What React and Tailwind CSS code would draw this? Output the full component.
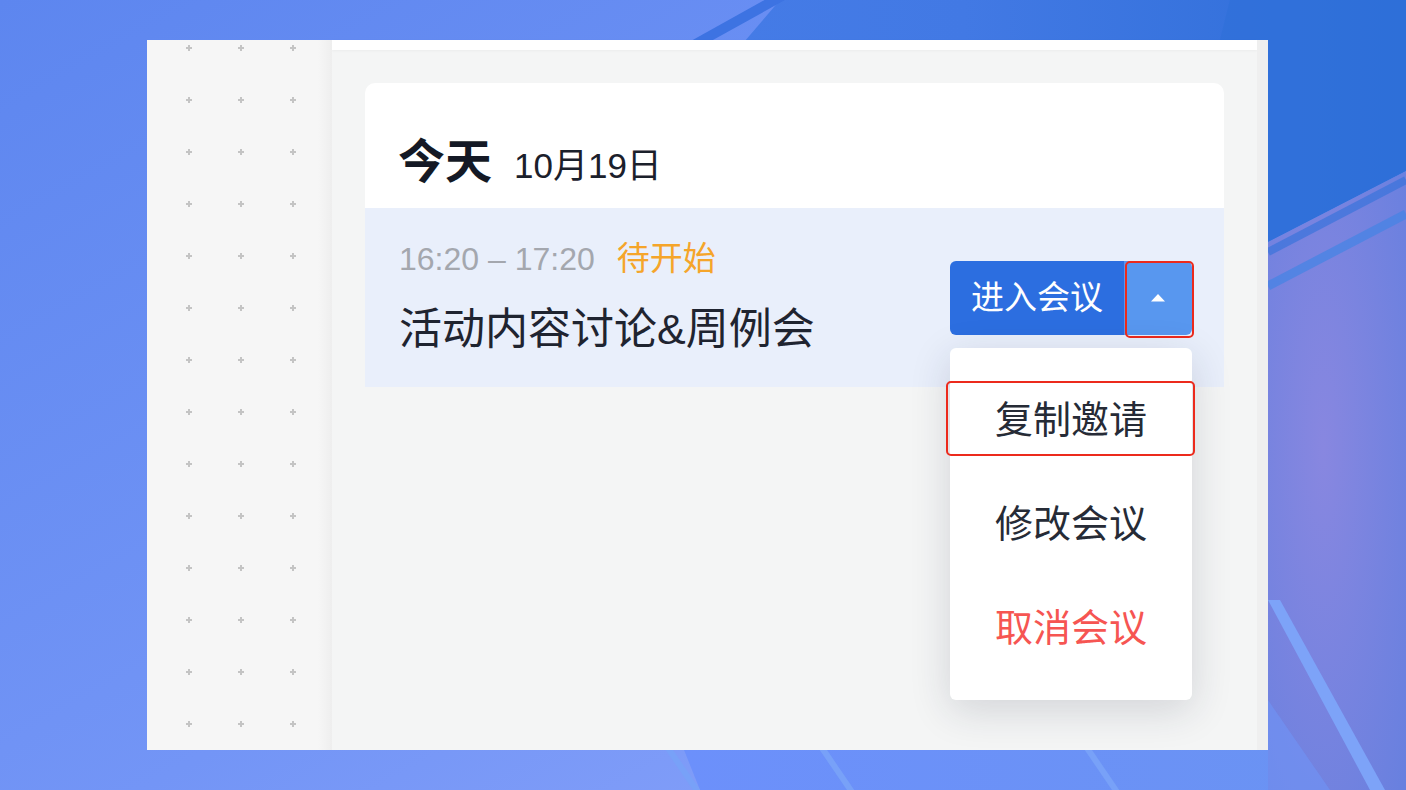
import React from 'react';

const fontStack = "font-['Liberation_Sans','Noto_Sans_CJK_SC',sans-serif]";

const Backdrop = () => (
    <svg className="absolute inset-0" width="1406" height="790" viewBox="0 0 1406 790">
        <defs>
            <linearGradient id="bgBase" x1="0" y1="0" x2="1" y2="1">
                <stop offset="0" stopColor="#5d86ef" />
                <stop offset="0.55" stopColor="#7395f6" />
                <stop offset="1" stopColor="#8ea5fb" />
            </linearGradient>
            <linearGradient id="bgTop" x1="0" y1="0" x2="1" y2="0">
                <stop offset="0" stopColor="#4a7fea" />
                <stop offset="0.6" stopColor="#4279e4" />
                <stop offset="1" stopColor="#2e6ed8" />
            </linearGradient>
            <radialGradient id="bgPurple" cx="0.4" cy="0.45" r="0.8">
                <stop offset="0" stopColor="#8887e0" />
                <stop offset="1" stopColor="#6880df" />
            </radialGradient>
            <linearGradient id="bgBottom" x1="0" y1="0" x2="1" y2="0">
                <stop offset="0" stopColor="#6c90fb" />
                <stop offset="1" stopColor="#6a93f2" />
            </linearGradient>
        </defs>
        <rect width="1406" height="790" fill="url(#bgBase)" />
        <polygon points="680,740 1406,740 1406,790 700,790" fill="url(#bgBottom)" />
        <polygon points="780,0 1406,0 1406,171 1268,242 640,560 300,560" fill="url(#bgTop)" />
        <polygon points="1406,171 1406,790 1268,790 1268,242" fill="url(#bgPurple)" />
        <polygon points="1406,0 1406,171 1268,242 1200,120 1230,0" fill="#2f6fd9" opacity="0.6" />
        <line x1="782" y1="-4" x2="692" y2="46" stroke="#3d73e2" strokeWidth="10" />
        <line x1="1268" y1="286" x2="1406" y2="214" stroke="#4a84e4" strokeWidth="9" opacity="0.8" />
        <line x1="1268" y1="252" x2="1406" y2="180" stroke="#3a74dc" strokeWidth="8" opacity="0.7" />
        <polygon points="1268,600 1280,600 1385,790 1370,790" fill="#7da3f8" />
        <polygon points="1268,700 1268,790 1330,790" fill="#6f95f6" opacity="0.6" />
        <line x1="668" y1="748" x2="698" y2="792" stroke="#78a1f8" strokeWidth="6" />
        <line x1="822" y1="748" x2="852" y2="792" stroke="#78a1f8" strokeWidth="6" />
        <line x1="1087" y1="748" x2="1117" y2="792" stroke="#78a1f8" strokeWidth="6" />
    </svg>
);

const DotPanel = () => (
    <div className="relative w-[185px] h-full bg-[#f6f6f6] flex">
        <svg className="flex-1 h-full" width="185" height="710">
            <defs>
                <pattern id="plusDots" x="16" y="-18" width="52" height="52" patternUnits="userSpaceOnUse">
                    <rect x="23" y="25" width="6" height="2" fill="#c4c4c4" />
                    <rect x="25" y="23" width="2" height="6" fill="#c4c4c4" />
                </pattern>
            </defs>
            <rect width="185" height="710" fill="url(#plusDots)" />
        </svg>
        <div className="absolute right-0 top-0 bottom-0 w-[14px] bg-gradient-to-r from-transparent to-[#eeeeee]" />
    </div>
);

const MenuItem = ({ label, danger, highlighted }) => (
    <div className="relative h-[104px] flex items-center justify-center">
        <span className={`text-[38px] leading-none ${danger ? 'text-[#f65552]' : 'text-[#262b36]'}`}>{label}</span>
        {highlighted && (
            <div className="absolute -left-[4px] -right-[3px] top-[13px] h-[75px] border-2 border-[#ec2a1c] rounded-[5px]" />
        )}
    </div>
);

const JoinButton = () => (
    <div className="relative flex h-[74px] w-[242px]">
        <button className="w-[174px] h-full bg-[#2c6ee0] rounded-l-[6px] text-white text-[33px] leading-none flex items-center justify-center">
            进入会议
        </button>
        <button className="relative w-[68px] h-full bg-[#5897ef] rounded-r-[6px] flex items-center justify-center">
            <svg width="16" height="9" viewBox="0 0 16 9">
                <path d="M1 8.5 L8 1 L15 8.5 Z" fill="#ffffff" />
            </svg>
            <div className="absolute left-[1px] -right-[2px] top-0 -bottom-[3px] border-2 border-[#ec2a1c] rounded-[5px]" />
        </button>

        {/* ─── Dropdown ─── */}
        <div className="absolute left-0 top-[87px] w-[242px] h-[352px] bg-white rounded-[6px] shadow-[0_10px_40px_rgba(30,40,60,0.16)] pt-[20px]">
            <MenuItem label="复制邀请" highlighted />
            <MenuItem label="修改会议" />
            <MenuItem label="取消会议" danger />
        </div>
    </div>
);

const App = () => {
    return (
        <div className={`relative w-[1406px] h-[790px] overflow-hidden ${fontStack}`}>
            <Backdrop />

            <div className="relative pt-[40px] pl-[147px]">
                <div className="flex w-[1121px] h-[710px]">
                    <DotPanel />

                    <div className="flex-1 flex">
                        <div className="flex-1 flex flex-col bg-[#f4f5f5]">
                            <div className="h-[10px] bg-white shadow-[0_1px_3px_rgba(0,0,0,0.04)]" />

                            <div className="px-[33px] pt-[33px]">
                                <div className="bg-white rounded-t-[10px]">
                                    {/* ─── Header ─── */}
                                    <div className="h-[125px] pl-[33px] pt-[55px] flex items-baseline gap-[22px]">
                                        <span className="text-[47px] leading-none font-bold text-[#141925]">今天</span>
                                        <span className="text-[35px] leading-none text-[#1b202b]">10月19日</span>
                                    </div>

                                    {/* ─── Meeting row ─── */}
                                    <div className="h-[179px] bg-[#e9effb] pl-[34px] pr-[32px] flex items-center justify-between">
                                        <div className="flex flex-col pb-[2px]">
                                            <div className="flex items-center gap-[22px] text-[32px] leading-none">
                                                <span className="text-[#a4a7ae]">16:20 – 17:20</span>
                                                <span className="text-[33px] text-[#f5a52a]">待开始</span>
                                            </div>
                                            <div className="mt-[33px] text-[43px] leading-none text-[#1f2430]">
                                                活动内容讨论&amp;周例会
                                            </div>
                                        </div>
                                        <JoinButton />
                                    </div>
                                </div>
                            </div>
                        </div>
                        <div className="w-[11px] bg-[#efefef]" />
                    </div>
                </div>
            </div>
        </div>
    );
};

export default App;
